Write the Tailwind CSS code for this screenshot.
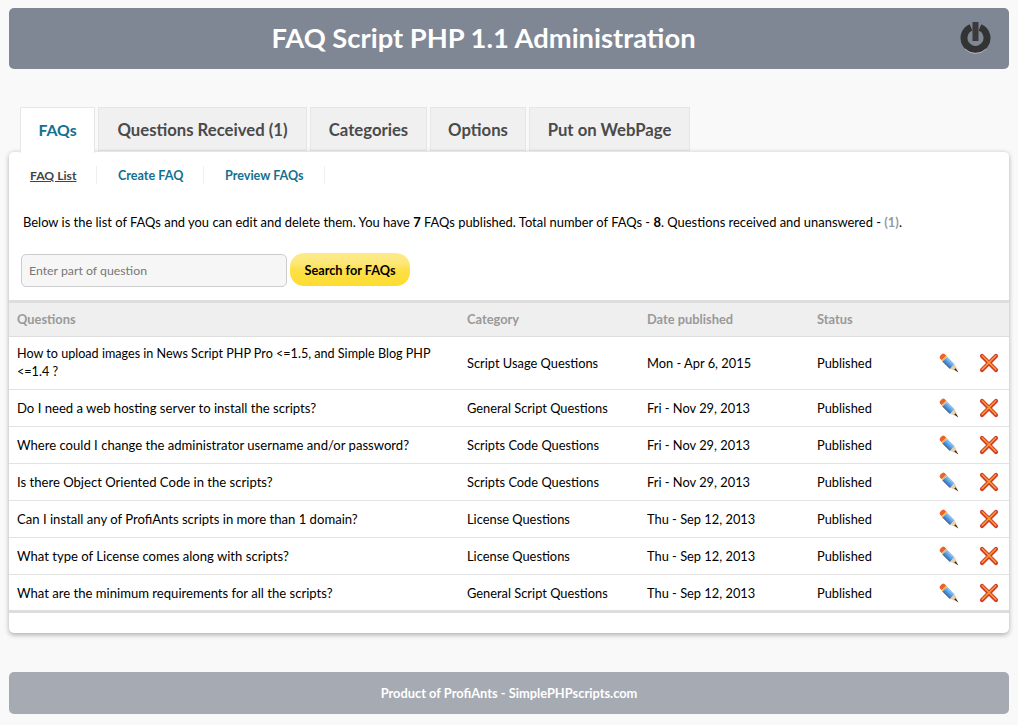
<!DOCTYPE html>
<html lang="en">
<head>
<meta charset="UTF-8" />
<title>FAQ Script PHP Administration</title>
<script src="https://cdn.jsdelivr.net/npm/@tailwindcss/browser@4"></script>
</head>
<body class="bg-[#f9f9f9] font-['Lato',sans-serif] text-[13px] text-black">
<svg class="absolute w-0 h-0">
  <defs>
    <linearGradient id="pb" gradientUnits="userSpaceOnUse" x1="6" y1="13" x2="12" y2="7"><stop offset="0" stop-color="#1f5fa8"/><stop offset="0.5" stop-color="#4f97e0"/><stop offset="1" stop-color="#a5d0f2"/></linearGradient>
    <symbol id="pencil" viewBox="0 0 20 20">
      <path d="M2.7 7.3 7.3 2.7 5.6 1Q4.5 0.2 3 1L1 3Q0.2 4.5 1 5.6Z" fill="#e8642c"/>
      <path d="M2.7 7.3 7.3 2.7 8.3 3.7 3.7 8.3Z" fill="#f0b64a"/>
      <path d="M3.7 8.3 8.3 3.7 15.8 11.2 11.2 15.8Z" fill="url(#pb)"/>
      <path d="M3.7 8.3 11.2 15.8" stroke="#39465a" stroke-width="0.9"/>
      <path d="M15.8 11.2 11.2 15.8 19.5 19.5Z" fill="#e8cfa8"/>
      <path d="M16.6 15.2 15.2 16.6 19.5 19.5Z" fill="#222"/>
    </symbol>
    <symbol id="cross" viewBox="0 0 20 20">
      <path d="M3 3 17 17M17 3 3 17" fill="none" stroke="#cf3d28" stroke-width="4.2" stroke-linecap="round"/>
      <path d="M3.2 2.8 16.8 16.4M16.8 2.8 3.2 16.4" fill="none" stroke="#f79a38" stroke-width="1.5" stroke-linecap="round"/>
    </symbol>
  </defs>
</svg>
<div class="h-[725px] overflow-hidden px-[9px] pt-2">
  <header class="relative h-[61px] rounded-[5px] bg-[#7f8694] flex items-center justify-center pr-[51px]">
    <h1 class="text-[27.35px] font-bold text-white -mt-[1px]">FAQ Script PHP 1.1 Administration</h1>
    <svg class="absolute right-[17px] top-[13px]" width="32" height="34" viewBox="0 0 32 34">
      <path d="M11 6.4A11.5 11.5 0 1 0 20 6.4" fill="none" stroke="#333" stroke-width="7"/>
      <path d="M5 28A15 15 0 0 0 26 28" fill="none" stroke="#fff" stroke-opacity="0.5" stroke-width="1"/>
      <rect x="12.5" y="1" width="6" height="19" fill="#3a3a3a"/>
    </svg>
  </header>
  <nav class="mt-[38px] ml-[11px] flex gap-[3px] h-[44px] text-[16.7px] font-bold text-[#4a4a4a]">
    <a class="w-[75px] flex items-center justify-center bg-white border border-[#e6e6e6] border-b-0 text-[#14708f] text-[15.8px] relative z-10 h-[46px] pb-[2px]">FAQs</a>
    <a class="w-[209px] flex items-center justify-center bg-[#f0f0f0] border border-[#e6e6e6] pt-[4px]">Questions Received (1)</a>
    <a class="w-[117px] flex items-center justify-center bg-[#f0f0f0] border border-[#e6e6e6] pt-[4px]">Categories</a>
    <a class="w-[96px] flex items-center justify-center bg-[#f0f0f0] border border-[#e6e6e6] pt-[4px]">Options</a>
    <a class="w-[161px] flex items-center justify-center bg-[#f0f0f0] border border-[#e6e6e6] pt-[4px]">Put on WebPage</a>
  </nav>
  <main class="relative bg-white rounded-[5px] border-t border-[#e6e6e6] shadow-[0_2px_5px_rgba(0,0,0,0.3)] h-[482px]">
    <div class="flex pl-[21px] pt-[14px] h-[34px] text-[12.6px] leading-[19px] font-bold text-[#14708f]">
      <a class="w-[67px] h-[18px] border-r border-[#eee] text-[#444] text-[12.2px]"><span class="underline">FAQ List</span></a>
      <a class="w-[107px] h-[18px] pl-[21px] border-r border-[#eee]">Create FAQ</a>
      <a class="w-[121px] h-[18px] pl-[21px] border-r border-[#eee]">Preview FAQs</a>
    </div>
    <p class="mt-[27px] ml-[14px] text-[12.93px] leading-[18px]">Below is the list of FAQs and you can edit and delete them. You have <b>7</b> FAQs published. Total number of FAQs - <b>8</b>. Questions received and unanswered - <b class="text-[#999]">(1)</b>.</p>
    <div class="mt-[23px] ml-3 flex gap-[3px] items-center">
      <input class="w-[266px] h-[33px] border border-[#ccc] rounded-[5px] bg-[#f6f6f6] pl-[7px] text-[12.3px] placeholder:text-[#777]" placeholder="Enter part of question" />
      <button class="w-[120px] h-[33px] -mt-[2px] pt-[2px] rounded-[14px] bg-[linear-gradient(#fdeb88_0%,#fde77a_30%,#fee04a_50%,#fddc2e_100%)] text-[12.7px] font-bold">Search for FAQs</button>
    </div>
    <table class="mt-[13px] w-full table-fixed border-collapse border-y-[3px] border-[#ddd] text-[12.85px] leading-[18px]">
      <colgroup><col class="w-[458px]"><col class="w-[180px]"><col class="w-[170px]"><col class="w-[110px]"><col class="w-[82px]"></colgroup>
      <thead>
        <tr class="h-[35px] bg-[#efefef] border-b border-[#ddd] text-left font-bold text-[#999]">
          <th class="pl-2 pb-[2px]">Questions</th><th class="pb-[2px]">Category</th><th class="pb-[2px]">Date published</th><th class="pb-[2px]">Status</th><th></th>
        </tr>
      </thead>
      <tbody>
        <tr class="h-[53px] border-b border-[#e3e3e3]">
          <td class="pl-2 pr-4 text-[12.6px]">How to upload images in News Script PHP Pro &lt;=1.5, and Simple Blog PHP &lt;=1.4 ?</td><td>Script Usage Questions</td><td>Mon - Apr 6, 2015</td><td>Published</td>
          <td><div class="flex gap-5 pl-3"><svg class="size-5"><use href="#pencil"/></svg><svg class="size-5"><use href="#cross"/></svg></div></td>
        </tr>
        <tr class="h-[37px] border-b border-[#e3e3e3]">
          <td class="pl-2 text-[13.1px]">Do I need a web hosting server to install the scripts?</td><td>General Script Questions</td><td>Fri - Nov 29, 2013</td><td>Published</td>
          <td><div class="flex gap-5 pl-3"><svg class="size-5"><use href="#pencil"/></svg><svg class="size-5"><use href="#cross"/></svg></div></td>
        </tr>
        <tr class="h-[37px] border-b border-[#e3e3e3]">
          <td class="pl-2 text-[13.1px]">Where could I change the administrator username and/or password?</td><td>Scripts Code Questions</td><td>Fri - Nov 29, 2013</td><td>Published</td>
          <td><div class="flex gap-5 pl-3"><svg class="size-5"><use href="#pencil"/></svg><svg class="size-5"><use href="#cross"/></svg></div></td>
        </tr>
        <tr class="h-[37px] border-b border-[#e3e3e3]">
          <td class="pl-2 text-[13.1px]">Is there Object Oriented Code in the scripts?</td><td>Scripts Code Questions</td><td>Fri - Nov 29, 2013</td><td>Published</td>
          <td><div class="flex gap-5 pl-3"><svg class="size-5"><use href="#pencil"/></svg><svg class="size-5"><use href="#cross"/></svg></div></td>
        </tr>
        <tr class="h-[37px] border-b border-[#e3e3e3]">
          <td class="pl-2 text-[13.1px]">Can I install any of ProfiAnts scripts in more than 1 domain?</td><td>License Questions</td><td>Thu - Sep 12, 2013</td><td>Published</td>
          <td><div class="flex gap-5 pl-3"><svg class="size-5"><use href="#pencil"/></svg><svg class="size-5"><use href="#cross"/></svg></div></td>
        </tr>
        <tr class="h-[37px] border-b border-[#e3e3e3]">
          <td class="pl-2 text-[13.1px]">What type of License comes along with scripts?</td><td>License Questions</td><td>Thu - Sep 12, 2013</td><td>Published</td>
          <td><div class="flex gap-5 pl-3"><svg class="size-5"><use href="#pencil"/></svg><svg class="size-5"><use href="#cross"/></svg></div></td>
        </tr>
        <tr class="h-[37px]">
          <td class="pl-2 text-[13.1px]">What are the minimum requirements for all the scripts?</td><td>General Script Questions</td><td>Thu - Sep 12, 2013</td><td>Published</td>
          <td><div class="flex gap-5 pl-3"><svg class="size-5"><use href="#pencil"/></svg><svg class="size-5"><use href="#cross"/></svg></div></td>
        </tr>
      </tbody>
    </table>
  </main>
  <footer class="mt-[39px] h-[42px] pt-[1px] rounded-[5px] bg-[#a6aab3] flex items-center justify-center text-white font-bold text-[12.85px]">Product of ProfiAnts - SimplePHPscripts.com</footer>
</div>
</body>
</html>
